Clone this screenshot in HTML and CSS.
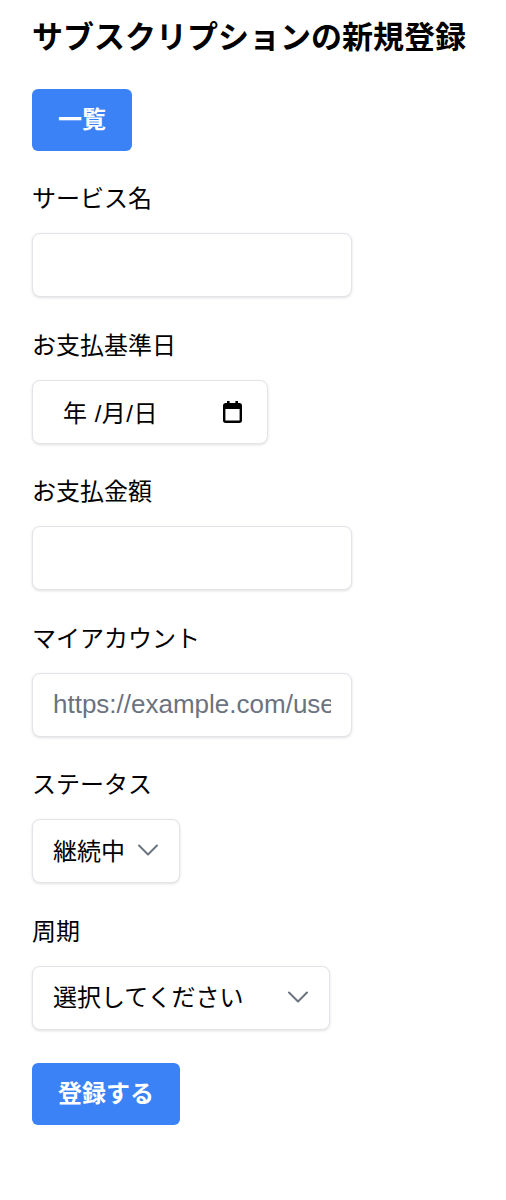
FILE: index.html
```html
<!DOCTYPE html>
<html lang="ja">
<head>
    <meta charset="UTF-8">
    <meta name="viewport" content="width=device-width, initial-scale=1.0">
    <title>サブスクリプションの新規登録</title>
    <link rel="stylesheet" href="styles.css">
</head>
<body>

<div class="page">
    <h1 class="page-title">サブスクリプションの新規登録</h1>

    <a class="btn" href="#">一覧</a>

    <form class="sub-form" id="subscriptionForm">
        <div class="field">
            <label for="name">サービス名</label>
            <input type="text" id="name" name="name" class="input input-wide">
        </div>

        <div class="field">
            <label for="billing_date">お支払基準日</label>
            <div class="input date-input" id="billing_date">
                <span class="date-text">年 /月/日</span>
                <svg class="calendar-icon" width="19" height="22" viewBox="0 0 19 22">
                    <rect x="1.2" y="3.2" width="16.6" height="17.6" rx="1.5" fill="none" stroke="#000" stroke-width="2.4"/>
                    <rect x="1" y="3" width="17" height="5" fill="#000"/>
                    <rect x="4" y="0" width="2.6" height="4" fill="#000"/>
                    <rect x="12.4" y="0" width="2.6" height="4" fill="#000"/>
                </svg>
            </div>
        </div>

        <div class="field">
            <label for="amount">お支払金額</label>
            <input type="text" id="amount" name="amount" class="input input-wide">
        </div>

        <div class="field">
            <label for="account_url">マイアカウント</label>
            <input type="text" id="account_url" name="account_url" class="input input-wide input-url" placeholder="https://example.com/user">
        </div>

        <div class="field">
            <label for="status">ステータス</label>
            <div class="select-wrap select-status">
                <select id="status" name="status" class="input select">
                    <option>継続中</option>
                    <option>解約済</option>
                </select>
                <svg class="chevron" width="20" height="14" viewBox="0 0 20 14">
                    <path d="M1 2.5l9 9 9-9" fill="none" stroke="#6b7280" stroke-width="2" stroke-linecap="round" stroke-linejoin="round"/>
                </svg>
            </div>
        </div>

        <div class="field">
            <label for="cycle">周期</label>
            <div class="select-wrap select-cycle">
                <select id="cycle" name="cycle" class="input select">
                    <option>選択してください</option>
                    <option>毎月</option>
                    <option>毎年</option>
                </select>
                <svg class="chevron" width="20" height="14" viewBox="0 0 20 14">
                    <path d="M1 2.5l9 9 9-9" fill="none" stroke="#6b7280" stroke-width="2" stroke-linecap="round" stroke-linejoin="round"/>
                </svg>
            </div>
        </div>

        <div class="actions">
            <button type="submit" class="btn">登録する</button>
        </div>
    </form>
</div>

</body>
</html>
```

FILE: styles.css
```css
/* Global styles */
body {
    margin: 0;
    padding: 0;
    background: #ffffff;
    color: #000000;
    font-family: 'Liberation Sans', 'Noto Sans CJK JP', sans-serif;
}

.page {
    padding: 17px 32px 40px;
}

.page-title {
    font-size: 31px;
    font-weight: 700;
    line-height: 42px;
    margin: 0 0 30px;
}

/* Buttons */
.btn {
    display: inline-block;
    background: #3b82f6;
    color: #ffffff;
    font-family: inherit;
    font-size: 24px;
    font-weight: 700;
    line-height: 32px;
    padding: 15px 26px;
    border: none;
    border-radius: 6px;
    text-decoration: none;
    cursor: pointer;
}

.btn:hover {
    background: #2563eb;
}

/* Form */
.sub-form {
    display: flex;
    flex-direction: column;
    gap: 30.6px;
    margin-top: 30px;
}

.field {
    display: flex;
    flex-direction: column;
    align-items: flex-start;
    gap: 16px;
}

.field label {
    font-size: 24px;
    line-height: 36px;
}

.input {
    box-sizing: border-box;
    height: 64px;
    padding: 0 20px;
    border: 1.5px solid #e2e4e9;
    border-radius: 8px;
    background: #ffffff;
    box-shadow: 0 1px 3px rgba(0, 0, 0, 0.12);
    font-family: inherit;
    font-size: 24px;
    color: #000000;
}

.input:focus {
    outline: none;
    border-color: #3b82f6;
}

.input::placeholder {
    color: #6b7280;
}

.input-wide {
    width: 320px;
}

.input-url {
    font-size: 26px;
}

/* Date field */
.date-input {
    width: 236px;
    display: flex;
    align-items: center;
    justify-content: space-between;
    padding: 0 25px 0 30px;
}

.date-text {
    font-size: 24px;
    letter-spacing: 0.5px;
}

.calendar-icon {
    margin-top: 1px;
}

/* Selects */
.select-wrap {
    position: relative;
}

.select {
    width: 100%;
    appearance: none;
    -webkit-appearance: none;
    cursor: pointer;
}

.chevron {
    position: absolute;
    top: 24px;
    pointer-events: none;
}

.select-status {
    width: 148px;
}

.select-status .chevron {
    right: 22px;
}

.select-cycle {
    width: 298px;
}

.select-cycle .chevron {
    right: 22px;
}

.actions {
    margin-top: 2px;
}
```
